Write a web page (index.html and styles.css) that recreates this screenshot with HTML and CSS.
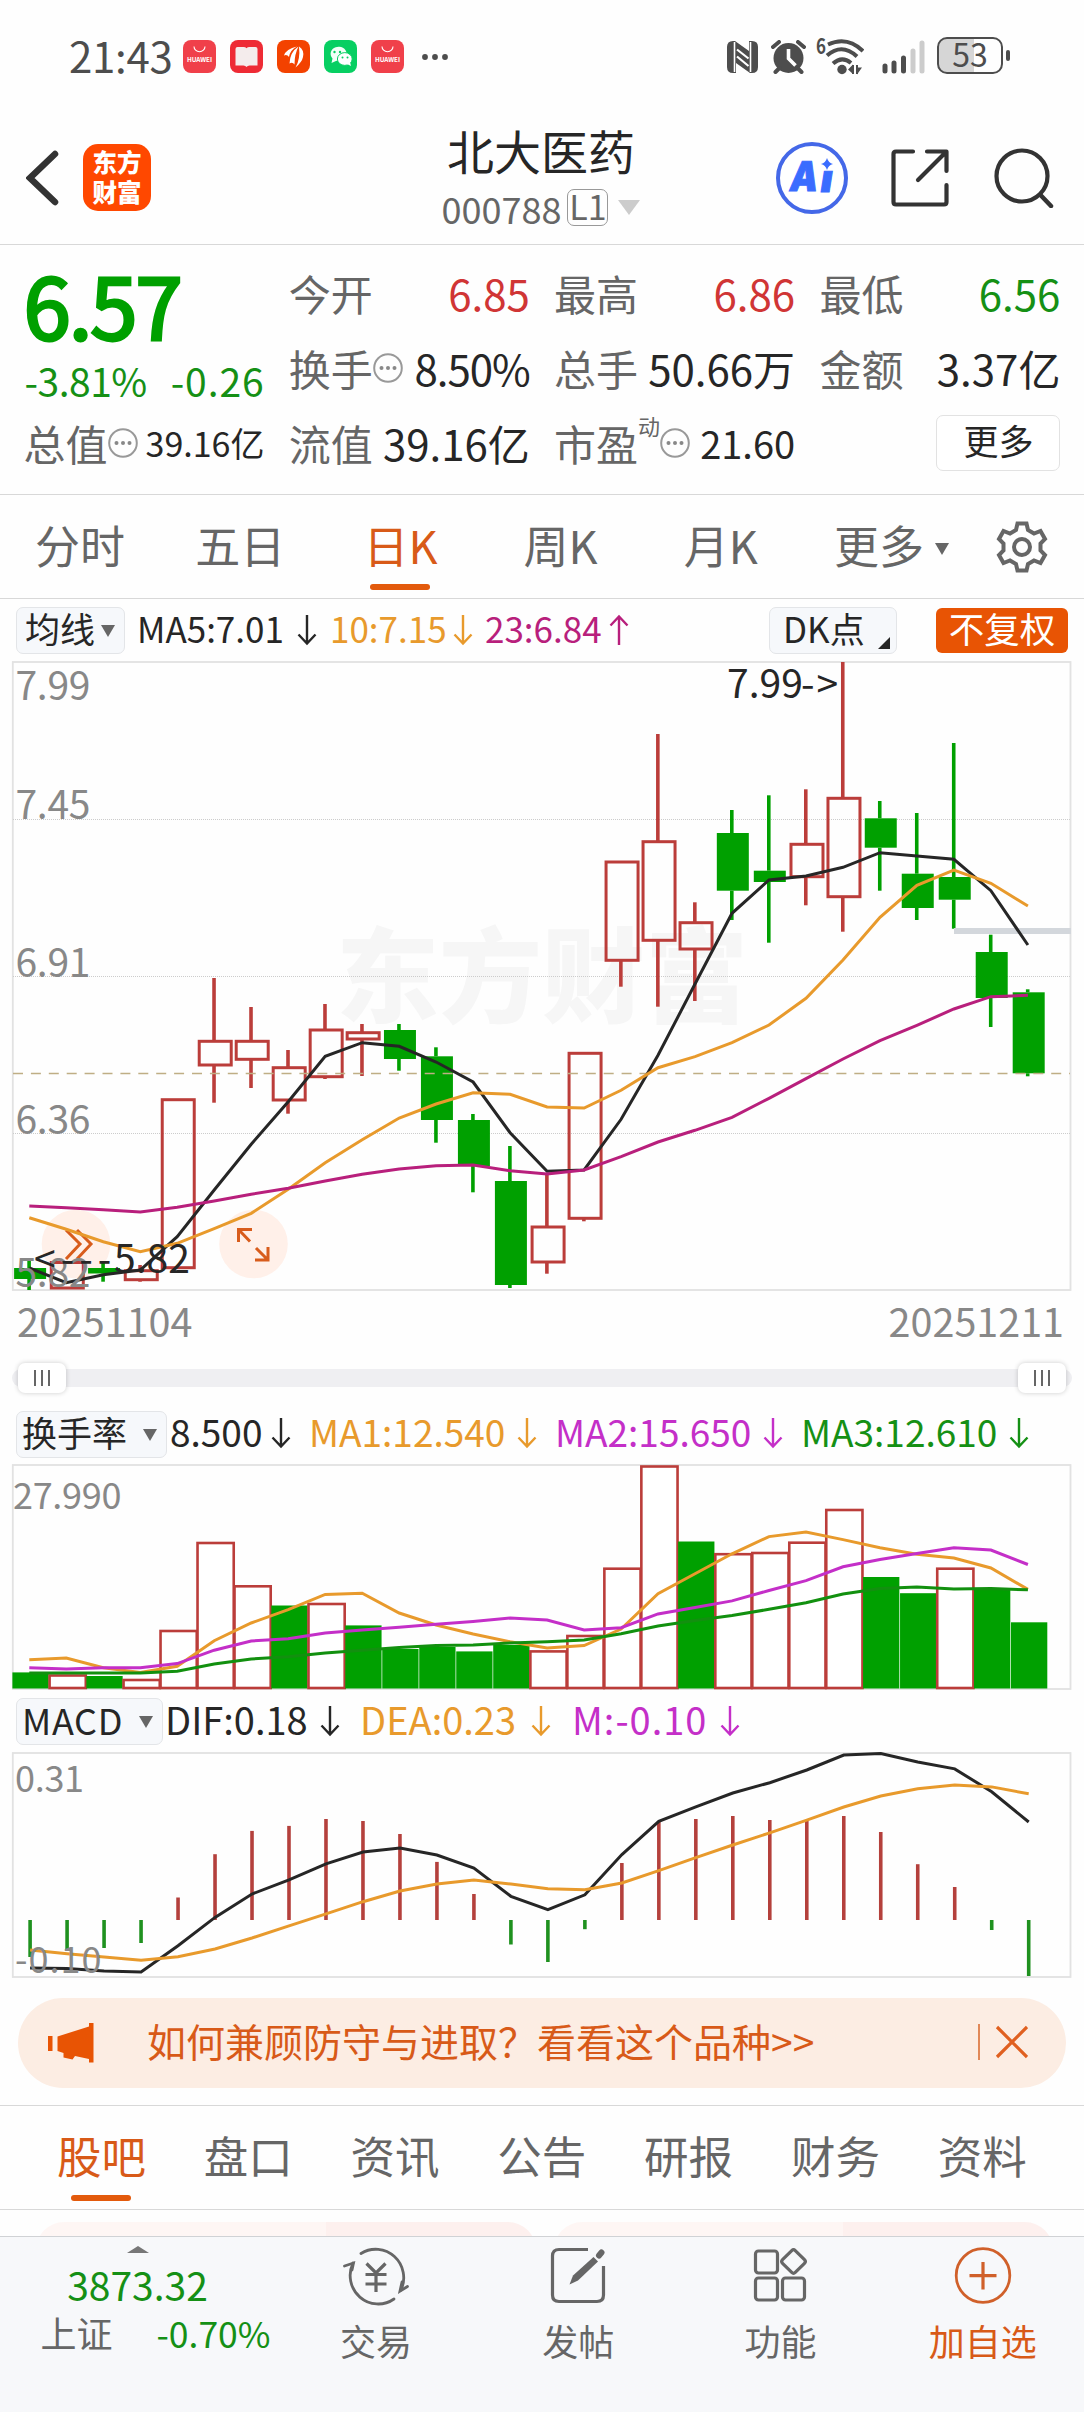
FILE: index.html
```html
<!DOCTYPE html>
<html lang="zh-CN">
<head>
    <meta charset="UTF-8">
    <meta name="viewport" content="width=device-width, initial-scale=1.0">
    <title>北大医药 000788</title>
    <link rel="stylesheet" href="styles.css">
</head>
<body>

    <!-- Shared symbols -->
    <svg class="symbols" width="0" height="0">
        <symbol id="arrow-down" viewBox="0 0 20 32">
            <path d="M10 1V29M1.5 20.5L10 29.5L18.5 20.5" fill="none" stroke="currentColor" stroke-width="2.4"/>
        </symbol>
        <symbol id="arrow-up" viewBox="0 0 20 32">
            <path d="M10 31V3M1.5 11.5L10 2.5L18.5 11.5" fill="none" stroke="currentColor" stroke-width="2.4"/>
        </symbol>
        <symbol id="info" viewBox="0 0 30 30">
            <circle cx="15" cy="15" r="13.8" fill="none" stroke="#999" stroke-width="2"/>
            <g fill="#888"><circle cx="8.5" cy="15" r="2"/><circle cx="15" cy="15" r="2"/><circle cx="21.5" cy="15" r="2"/></g>
        </symbol>
    </svg>

    <!-- Status Bar -->
    <div class="status">
        <span class="clock">21:43</span>
        <div class="apps">
            <svg width="33" height="33" viewBox="0 0 33 33">
                <rect width="33" height="33" rx="8" fill="#f0404a"/>
                <path d="M11 6.500a5.500 5.200 0 0 0 11 0" fill="none" stroke="#fff" stroke-width="1.100"/>
                <text x="4" y="21.500" font-size="6.400" font-weight="700" textLength="25" fill="#fff">HUAWEI</text>
            </svg>
            <svg width="33" height="33" viewBox="0 0 33 33">
                <rect width="33" height="33" rx="8" fill="#ee2b35"/>
                <path d="M5.500 9q0-2 2-2h6q2 0 3 1.200q1-1.200 3-1.200h6q2 0 2 2v16.500h-8q-2 0-3 1.500q-1-1.500-3-1.500h-8z" fill="#f4ecec"/>
            </svg>
            <svg width="33" height="33" viewBox="0 0 33 33">
                <rect width="33" height="33" rx="8" fill="#f34200"/>
                <path d="M7 15.500Q9 9 20 6.500Q13 10 12 17Q10 14 7 15.500z" fill="#fff"/>
                <path d="M12.500 23.500Q13 12 21.500 6.500Q17.500 14 17.500 24.500Q15.500 21.500 12.500 23.500z" fill="#fff"/>
                <path d="M18.500 27.500Q23.500 19 22 6.500Q27.500 10 26 17Q25 22 18.500 27.500z" fill="#fff"/>
            </svg>
            <svg width="33" height="33" viewBox="0 0 33 33">
                <rect width="33" height="33" rx="8" fill="#07cf62"/>
                <path d="M7.500 23l1-4.500a8 7.200 0 1 1 4 2.300z" fill="#f2fff7"/>
                <ellipse cx="20.800" cy="19" rx="7.400" ry="6.400" fill="#fff" stroke="#07cf62"/>
                <path d="M23 24l4 2-1-4z" fill="#fff"/>
                <g fill="#07cf62"><circle cx="10.500" cy="12" r="1.200"/><circle cx="16" cy="12" r="1.200"/><circle cx="18.500" cy="17.500" r="1"/><circle cx="23.500" cy="17.500" r="1"/></g>
            </svg>
            <svg width="33" height="33" viewBox="0 0 33 33">
                <rect width="33" height="33" rx="8" fill="#f0404a"/>
                <path d="M11 6.500a5.500 5.200 0 0 0 11 0" fill="none" stroke="#fff" stroke-width="1.100"/>
                <text x="4" y="21.500" font-size="6.400" font-weight="700" textLength="25" fill="#fff">HUAWEI</text>
            </svg>
        </div>
        <svg class="dots" width="28" height="8" viewBox="0 0 28 8"><g fill="#4d4d4d"><circle cx="4" cy="4" r="2.900"/><circle cx="14" cy="4" r="2.900"/><circle cx="24" cy="4" r="2.900"/></g></svg>
        <div class="system">
            <!-- nfc -->
            <svg width="31" height="32" viewBox="0 0 31 32">
                <path d="M6 0Q0 0 0 6V26Q0 32 6 32z" fill="#4d4d4d"/>
                <path d="M25 0Q31 0 31 6V26Q31 32 25 32z" fill="#4d4d4d"/>
                <path d="M8 0L22 10V0H25V32H23L9 22V32H6V0z" fill="#4d4d4d"/>
                <path d="M7.500 1V31M23.500 1V31" stroke="#fff" stroke-width="1.600"/>
                <path d="M10 8.500L21.500 17.500M10 15.500L21.500 25" stroke="#fff" stroke-width="2.200"/>
            </svg>
            <!-- alarm -->
            <svg class="alarm" width="35" height="34" viewBox="0 0 35 34">
                <circle cx="17.500" cy="18" r="15" fill="#4d4d4d"/>
                <path d="M2 7l6-5M33 7l-6-5M4.500 32l4-4M30.500 32l-4-4" stroke="#4d4d4d" stroke-width="4" stroke-linecap="round"/>
                <path d="M17.500 9v9.500l7 7" fill="none" stroke="#fff" stroke-width="3.600"/>
            </svg>
            <!-- wifi -->
            <svg class="wifi" width="48" height="37" viewBox="0 0 48 37">
                <text x="0" y="16" font-size="21" font-weight="700" textLength="10" lengthAdjust="spacingAndGlyphs" fill="#4d4d4d">6</text>
                <g fill="none" stroke="#4d4d4d" stroke-width="4">
                    <path d="M12 6.500Q31-2.500 47 13M11 17.500Q26 4.500 41 18.500M17 25.500Q26 17.500 35 25"/>
                </g>
                <circle cx="26" cy="31.500" r="4.700" fill="#4d4d4d"/>
                <path d="M32 31.500l5-5v9.500zM46 29.500h-5v7z" fill="#4d4d4d"/>
                <path d="M37 27v9M41 27v9" stroke="#4d4d4d" stroke-width="2"/>
            </svg>
            <!-- signal -->
            <svg class="signal" width="43" height="35" viewBox="0 0 43 35">
                <g stroke-width="5" stroke-linecap="round" stroke="#4d4d4d"><path d="M3 27v5M12 24v8M21.500 19v13"/><path d="M31 12v20M40 4v28" stroke="#ccc"/></g>
            </svg>
            <div class="battery"><span>53</span></div>
        </div>
    </div>

    <!-- Header -->
    <header class="header">
        <svg class="back" width="34" height="56" viewBox="0 0 34 56"><path d="M29 4L4 28L29 52" fill="none" stroke="#333" stroke-width="6.500" stroke-linecap="round"/></svg>
        <div class="logo"><span>东方</span><span>财富</span></div>
        <div class="title">
            <h1>北大医药</h1>
            <div class="code">000788<span class="level">L1</span><i class="tri"></i></div>
        </div>
        <div class="tools">
            <svg width="72" height="72" viewBox="0 0 72 72">
                <circle cx="36" cy="36" r="34" fill="#fff" stroke="#4468e8" stroke-width="4"/>
                <g class="ai" transform="translate(8 0) skewX(-9)">
                    <text x="12" y="49.500" font-size="41" textLength="28" lengthAdjust="spacingAndGlyphs">A</text>
                    <text x="43" y="50.500" font-size="38" textLength="12" lengthAdjust="spacingAndGlyphs">ı</text>
                </g>
                <path d="M51 16q1.500 5 6 6q-4.500 1-6 6q-1.500-5-6-6q4.500-1 6-6z" fill="#3a6cff"/>
            </svg>
            <svg class="share" width="58" height="58" viewBox="0 0 58 58">
                <path d="M22 2.500H5Q2.500 2.500 2.500 5V53Q2.500 55.500 5 55.500H53Q55.500 55.500 55.500 53V36M36 2.500H55.500V22M54 4L27 31" fill="none" stroke="#333" stroke-width="4.200" stroke-linecap="round" stroke-linejoin="round"/>
            </svg>
            <svg class="search" width="60" height="60" viewBox="0 0 60 60">
                <circle cx="28" cy="28" r="25.500" fill="none" stroke="#333" stroke-width="4.200"/>
                <path d="M46.500 47L57 58" stroke="#333" stroke-width="4.500" stroke-linecap="round"/>
            </svg>
        </div>
    </header>

    <!-- Quote -->
    <section class="quote">
        <div class="col main">
            <div class="price">6.57</div>
            <div class="change"><span>-3.81%</span><span>-0.26</span></div>
            <div class="row"><label>总值</label><svg class="info" width="30" height="30"><use href="#info"/></svg><b class="small">39.16亿</b></div>
        </div>
        <div class="col">
            <div class="row"><label>今开</label><b class="red">6.85</b></div>
            <div class="row"><label>换手</label><svg class="info" width="30" height="30"><use href="#info"/></svg><b class="rate">8.50%</b></div>
            <div class="row"><label>流值</label><b>39.16亿</b></div>
        </div>
        <div class="col">
            <div class="row"><label>最高</label><b class="red">6.86</b></div>
            <div class="row"><label>总手</label><b>50.66万</b></div>
            <div class="row"><label>市盈</label><sup>动</sup><svg class="info" width="30" height="30"><use href="#info"/></svg><b class="mid">21.60</b></div>
        </div>
        <div class="col">
            <div class="row"><label>最低</label><b class="green">6.56</b></div>
            <div class="row"><label>金额</label><b>3.37亿</b></div>
            <div class="row"><button class="more">更多</button></div>
        </div>
    </section>

    <!-- Period Tabs -->
    <nav class="periods">
        <a>分时</a><a>五日</a><a class="active">日K</a><a>周K</a><a>月K</a>
        <a class="wide">更多<i class="tri"></i></a>
        <svg class="gear" width="52" height="52" viewBox="0 0 52 52">
            <path d="M21.500 2.500h9l1.500 6.500 6 3.500 6.500-2.500 4.500 8-4.500 4.500v7l4.500 4.500-4.500 8-6.500-2.500-6 3.500-1.500 6.500h-9l-1.500-6.500-6-3.500-6.500 2.500-4.500-8 4.500-4.500v-7l-4.500-4.500 4.500-8 6.500 2.500 6-3.500z" fill="none" stroke="#666" stroke-width="4"/>
            <circle cx="26" cy="26" r="8" fill="none" stroke="#666" stroke-width="4"/>
        </svg>
    </nav>

    <!-- K Line Chart -->
    <div class="bar bar-ma">
        <span class="select">均线<i class="tri"></i></span>
        <span class="item w1">MA5:7.01<svg><use href="#arrow-down"/></svg></span>
        <span class="item w2 orange">10:7.15<svg><use href="#arrow-down"/></svg></span>
        <span class="item w3 pink">23:6.84<svg><use href="#arrow-up"/></svg></span>
        <span class="select dk">DK点<i class="corner"></i></span>
        <span class="adjust">不复权</span>
    </div>
    <svg class="chart" id="kline" width="1084" height="630" viewBox="0 661 1084 630"></svg>
    <div class="dates"><span>20251104</span><span>20251211</span></div>
    <div class="slider"><i class="handle"></i><i class="handle"></i></div>

    <!-- Turnover Chart -->
    <div class="bar bar-turn">
        <span class="select">换手率<i class="tri"></i></span>
        <span class="item t1">8.500<svg><use href="#arrow-down"/></svg></span>
        <span class="item t2 orange">MA1:12.540<svg><use href="#arrow-down"/></svg></span>
        <span class="item t2 purple">MA2:15.650<svg><use href="#arrow-down"/></svg></span>
        <span class="item t2 green">MA3:12.610<svg><use href="#arrow-down"/></svg></span>
    </div>
    <svg class="chart" id="turnover" width="1084" height="226" viewBox="0 1464 1084 226"></svg>

    <!-- MACD Chart -->
    <div class="bar bar-macd">
        <span class="select">MACD<i class="tri"></i></span>
        <span class="item m1">DIF:0.18<svg><use href="#arrow-down"/></svg></span>
        <span class="item m2 orange">DEA:0.23<svg><use href="#arrow-down"/></svg></span>
        <span class="item m3 purple">M:-0.10<svg><use href="#arrow-down"/></svg></span>
    </div>
    <svg class="chart" id="macd" width="1084" height="227" viewBox="0 1752 1084 227"></svg>

    <!-- Promo Banner -->
    <div class="promo">
        <svg width="46" height="40" viewBox="0 0 46 40"><path d="M0 13h4.500v15H0zM9.500 13.500L41 3.500V0h4.500v39.500H41V36l-14-3-2.500 3.500-9-2V30l-6-2z" fill="#e85404"/></svg>
        <p>如何兼顾防守与进取？看看这个品种&gt;&gt;</p>
        <svg class="close" width="50" height="38" viewBox="0 0 50 38"><path d="M1 1V37" stroke="#d8662a" stroke-width="1.500"/><path d="M19 4L49 34M49 4L19 34" stroke="#e06020" stroke-width="3.200"/></svg>
    </div>

    <!-- Info Tabs -->
    <nav class="tabs">
        <a class="active">股吧</a><a>盘口</a><a>资讯</a><a>公告</a><a>研报</a><a>财务</a><a>资料</a>
    </nav>
    <div class="cards"><div></div><div></div></div>

    <!-- Bottom Bar -->
    <footer class="bottom">
        <div class="index">
            <i class="up"></i>
            <div class="points">3873.32</div>
            <div class="pct"><span>上证</span><b>-0.70%</b></div>
        </div>
        <a>
            <svg width="66" height="60" viewBox="0 0 66 60">
                <g fill="none" stroke="#666" stroke-width="2.800" stroke-linecap="round">
                    <path d="M18 7.500A28 28.500 0 0 1 58 44M51 53A28 28.500 0 0 1 10 17"/>
                    <path d="M1.500 20L10.500 17L9 24M64.500 40.500L57 45L59 36"/>
                    <path stroke-linecap="butt" stroke-width="3.200" d="M23.500 17.500L33 27L42.500 17.500M22.500 28.500H43.500M22.500 38H43.500M33 27V46"/>
                </g>
            </svg>
            交易
        </a>
        <a>
            <svg width="56" height="60" viewBox="0 0 56 60">
                <path d="M38 3.500H9Q2.500 3.500 2.500 10V49Q2.500 55.500 9 55.500H47Q53.500 55.500 53.500 49V20" fill="none" stroke="#666" stroke-width="3.200"/>
                <path d="M19.500 38.500l3.500-9L43.500 11l4.500 4.500-20 19z" fill="#666"/>
                <path d="M49 9.500l2.500-3" stroke="#666" stroke-width="6" stroke-linecap="round"/>
            </svg>
            发帖
        </a>
        <a>
            <svg width="54" height="60" viewBox="0 0 54 60">
                <g fill="none" stroke="#666" stroke-width="3.200">
                    <rect x="2.500" y="5" width="22" height="22" rx="3"/>
                    <rect x="2.500" y="32" width="22" height="22" rx="3"/>
                    <rect x="29.500" y="32" width="22" height="22" rx="3"/>
                    <rect x="31.500" y="6.500" width="18" height="18" rx="2.500" transform="rotate(45 40.500 15.500)"/>
                </g>
            </svg>
            功能
        </a>
        <a class="active">
            <svg width="58" height="60" viewBox="0 0 58 60">
                <circle cx="29" cy="29.500" r="26.800" fill="none" stroke="#d0602a" stroke-width="2.800"/>
                <path d="M29 16V43.500M15.500 29.700H42.500" stroke="#d0602a" stroke-width="3.200"/>
            </svg>
            加自选
        </a>
    </footer>

    <script>
        const STEP = 36.985;
        const RED = "#bb3d3a", GREEN = "#00a000", BLACK = "#262626", ORANGE = "#e89a2c";

        const kline = document.getElementById("kline");
        const turnover = document.getElementById("turnover");
        const macd = document.getElementById("macd");

        // [up, high, bodyTop, bodyBottom, low]
        const candles = [
            [0, 1261, 1268, 1279, 1290], [1, 1262, 1262.5, 1288, 1288], [0, 1261.5, 1268, 1273.5, 1281.7], [1, 1265, 1270.7, 1279.7, 1281.7],
            [1, 1099.7, 1099.7, 1267.7, 1267.7], [1, 978, 1041.3, 1065, 1102.7], [1, 1007, 1041.3, 1059.3, 1088], [1, 1050, 1067.7, 1100, 1113.7],
            [1, 1004, 1030, 1076.7, 1079], [1, 1024, 1032.7, 1039, 1076], [0, 1024, 1030, 1059, 1070.7], [0, 1047.3, 1056.3, 1120, 1142.7],
            [0, 1114, 1120, 1166, 1192.3], [0, 1146, 1181, 1285, 1288], [1, 1173, 1227, 1262, 1273.7], [1, 1053.3, 1053.3, 1218.3, 1221.3],
            [1, 862, 862, 960.3, 986.7], [1, 734, 841.7, 940.3, 1006.7], [1, 902.3, 922.7, 949, 1001], [0, 810, 833, 890.7, 920],
            [0, 795.3, 870.7, 882, 942.7], [1, 789.3, 844.3, 876.7, 905.3], [1, 662, 798.3, 896.7, 931.7], [0, 801, 818.3, 847.7, 890.7],
            [0, 813, 873.7, 908, 920], [0, 743, 877, 899.7, 928.7], [0, 934.7, 952, 998, 1027], [0, 989.3, 992.3, 1073.3, 1076.3]
        ];
        const ma5 = [1268, 1282.7, 1274.7, 1270, 1236.7, 1190, 1144.3, 1101.7, 1056.3, 1042.7, 1046.3, 1062, 1082, 1132.7, 1171.3, 1170, 1119.3, 1055.3, 984, 913.3, 880, 876, 867.3, 852.7, 856, 859.3, 890.7, 945];
        const ma10 = [1217.7, 1229.3, 1241.7, 1251.7, 1243.3, 1228.7, 1213.3, 1189.3, 1162.7, 1139.7, 1118, 1104, 1092.7, 1094.3, 1107, 1108, 1090.3, 1067.7, 1056.7, 1042.7, 1025, 998.3, 960, 917.3, 885.3, 870, 883.3, 906];
        const ma23 = [1206, 1207.7, 1209.7, 1212, 1207.3, 1201, 1194.3, 1188.3, 1181, 1174.3, 1169, 1165.7, 1165, 1170.7, 1174, 1170, 1156.7, 1142, 1130.3, 1117.3, 1098.3, 1078.7, 1059, 1040.7, 1025.3, 1009, 996.7, 995.3];

        // Turnover bar tops, colours follow "up"
        const bars = [
            [0, 1672.4], [1, 1675.5], [0, 1676], [1, 1680], [1, 1631], [1, 1543], [1, 1586.3], [0, 1605.5], [1, 1604], [0, 1625.4],
            [0, 1649], [0, 1647], [0, 1651.4], [0, 1645], [1, 1651.4], [1, 1636], [1, 1568.7], [1, 1466.5], [0, 1541.5], [1, 1554.2],
            [1, 1553], [1, 1542.7], [1, 1510], [0, 1577], [0, 1593.2], [1, 1568.7], [0, 1588.5], [0, 1622.3]
        ];
        const tma1 = [1659.8, 1658, 1667.8, 1672.4, 1666.3, 1640.7, 1623, 1609.7, 1594.4, 1593.2, 1613, 1625, 1634, 1641.8, 1648, 1645.6, 1629, 1593.6, 1573.7, 1553.8, 1536.6, 1532, 1539.6, 1547.7, 1554.2, 1558, 1568, 1589.4];
        const tma2 = [1667.8, 1669, 1667.8, 1667.8, 1663.6, 1650.2, 1641, 1638.8, 1633, 1630, 1627.3, 1624.2, 1621.5, 1618, 1620, 1630, 1627.7, 1613.9, 1607.4, 1600.9, 1590.5, 1580.6, 1566.8, 1559.5, 1553.4, 1547.7, 1550, 1564.5];
        const tma3 = [1673, 1673, 1673, 1673, 1671.3, 1664, 1659, 1656.7, 1653, 1650.2, 1647.6, 1645.6, 1644.9, 1643, 1641.8, 1639.9, 1633.8, 1626, 1620.4, 1615.4, 1609.3, 1602.8, 1594, 1588.6, 1587, 1589, 1588.6, 1589.8];

        // MACD histogram ends, zero axis at 1920
        const hist = [1957, 1950, 1948, 1943, 1897.5, 1854.2, 1830.9, 1825.9, 1819, 1821, 1834, 1861.9, 1894, 1944.5, 1962, 1929.2, 1863, 1821, 1819, 1816, 1820, 1820, 1816, 1832, 1864.2, 1887, 1930, 1976];
        const dif = [1968, 1968.6, 1971, 1972, 1945.7, 1917.4, 1894, 1879.9, 1863.8, 1852, 1848, 1855, 1868, 1896.3, 1909.7, 1894.8, 1854.6, 1821.3, 1806.8, 1793, 1782.7, 1770, 1755, 1753.5, 1762, 1768.9, 1791.8, 1822];
        const dea = [1950, 1953.7, 1957, 1960.2, 1956.8, 1949, 1938, 1925.8, 1913.9, 1901.7, 1891, 1884, 1879.9, 1884, 1888.7, 1889.8, 1883, 1870.7, 1857.7, 1845, 1832.8, 1820.2, 1807, 1796, 1788.8, 1785, 1786.9, 1793.8];

        function add(svg, tag, attrs, text) {
            const el = document.createElementNS("http://www.w3.org/2000/svg", tag);
            for (const key in attrs) el.setAttribute(key, attrs[key]);
            if (text) el.textContent = text;
            svg.appendChild(el);
        }

        function frame(svg, top, bottom) {
            add(svg, "rect", { x: 12.8, y: top, width: 1057.7, height: bottom - top, fill: "none", stroke: "#e2e2e2", "stroke-width": 1.8 });
        }

        function line(svg, values, color, x0) {
            const points = values.map((y, i) => (x0 + i * STEP).toFixed(1) + "," + y).join(" ");
            add(svg, "polyline", { points, fill: "none", stroke: color, "stroke-width": 3 });
        }

        function label(svg, x, y, text, cls) {
            add(svg, "text", { x, y, class: cls }, text);
        }

        function drawKline() {
            label(kline, 336, 1015, "东方财富", "watermark");
            frame(kline, 662, 1290);
            [819.5, 976.5, 1133.5].forEach(y => add(kline, "path", { d: `M13 ${y}H1070`, stroke: "#ccc", "stroke-width": 1, "stroke-dasharray": "1 1" }));
            // floating buttons
            [76, 253.5].forEach(cx => add(kline, "circle", { cx, cy: 1244, r: 34.3, fill: "#fff0e9" }));
            add(kline, "path", { d: "M66 1230L80 1244L66 1259M77 1230L91 1244L77 1259M238.500 1242V1229.500H252M239 1230L250 1241.500M268 1247V1260H255M267.500 1259.500L256 1248", fill: "none", stroke: "#d85c1c", "stroke-width": 3 });
            candles.forEach(([up, high, top, bottom, low], i) => {
                const x = 29.1 + i * STEP;
                const color = up ? RED : GREEN;
                if (high < top) add(kline, "path", { d: `M${x} ${high}V${top}`, stroke: color, "stroke-width": 3.6 });
                if (low > bottom) add(kline, "path", { d: `M${x} ${bottom}V${low}`, stroke: color, "stroke-width": 3.6 });
                add(kline, "rect", up
                    ? { x: x - 14.8, y: top, width: 32, height: bottom - top, fill: "none", stroke: color, "stroke-width": 3 }
                    : { x: x - 15, y: top, width: 32, height: bottom - top, fill: color });
            });
            add(kline, "path", { d: "M13 1073.500H1070", stroke: "#bfae85", "stroke-width": 1.4, "stroke-dasharray": "10 7.9" });
            add(kline, "rect", { x: 954, y: 928, width: 117, height: 6, fill: "#d3d7dc" });
            line(kline, ma5, BLACK, 29.3);
            line(kline, ma10, ORANGE, 29.3);
            line(kline, ma23, "#b81f7c", 29.3);
            [[700, "7.99"], [819, "7.45"], [977, "6.91"], [1134, "6.36"], [1287, "5.82"]].forEach(([y, t]) => label(kline, 15.5, y, t, "axis"));
            label(kline, 727, 697.5, "7.99", "mark");
            label(kline, 801, 697.5, "->", "mark arrow");
            label(kline, 34, 1272.5, "<---", "mark dash");
            label(kline, 114, 1272.5, "5.82", "mark");
        }

        function drawTurnover() {
            frame(turnover, 1465, 1689);
            bars.forEach(([up, y], i) => {
                const x = 12.4 + i * STEP;
                add(turnover, "rect", up
                    ? { x: x + .2, y, width: 36.2, height: 1688 - y, fill: "#fff", stroke: RED, "stroke-width": 2.6 }
                    : { x, y, width: 36.3, height: 1688.5 - y, fill: GREEN });
            });
            line(turnover, tma1, ORANGE, 29.3);
            line(turnover, tma2, "#c42fc8", 29.3);
            line(turnover, tma3, "#12900f", 29.3);
            label(turnover, 13, 1509, "27.990", "axis sub");
        }

        function drawMacd() {
            frame(macd, 1753, 1977);
            hist.forEach((y, i) => {
                const x = 30.1 + i * STEP;
                add(macd, "path", { d: `M${x} 1920V${y}`, stroke: y < 1920 ? "#b4403c" : "#1f911f", "stroke-width": 3.6 });
            });
            line(macd, dif, BLACK, 30.1);
            line(macd, dea, ORANGE, 30.1);
            label(macd, 15, 1792, "0.31", "axis sub");
            label(macd, 15, 1973, "-0.10", "axis sub neg");
        }

        drawKline();
        drawTurnover();
        drawMacd();
    </script>

</body>
</html>
```
FILE: styles.css
```css
* {
    box-sizing: border-box;
}
body {
    margin: 0;
    width: 1084px;
    height: 2412px;
    overflow: hidden;
    background: #fefefe;
    color: #262626;
    font-family: "Noto Sans CJK SC", sans-serif;
    font-size: 42px;
}
svg {
    display: block;
    flex: none;
}
b, i {
    font-weight: normal;
    font-style: normal;
}
.symbols {
    position: absolute;
}
.red { color: #d03535; }
.row .green, .green { color: #159015; }
.orange { color: #e89a2c; }
.pink { color: #b81f7c; }
.purple { color: #c42fc8; }

.tri {
    display: inline-block;
    border: 7.500px solid transparent;
    border-top: 12px solid #666;
    border-bottom: 0;
}

/* Status bar */
.status {
    display: flex;
    align-items: center;
    height: 113px;
    padding: 0 74px 0 69px;
    color: #4d4d4d;
}
.clock {
    width: 114px;
    line-height: 40px;
    padding-bottom: 4px;
    letter-spacing: -.3px;
}
.apps {
    display: flex;
    gap: 14px;
}
.dots {
    margin-left: 17px;
}
.system {
    display: flex;
    align-items: center;
    margin-left: auto;
}
.alarm { margin-left: 13px; }
.wifi { margin: 0 18px 0 10px; }
.battery {
    position: relative;
    width: 66px;
    height: 37px;
    margin: 0 7px 2px 12px;
    border: 2.500px solid #4d4d4d;
    border-radius: 10px;
    background: linear-gradient(90deg, #d6d6d6 57%, transparent 57%);
    font-size: 32px;
    line-height: 29px;
    text-align: center;
}
.battery::after {
    content: "";
    position: absolute;
    right: -9px;
    top: 11px;
    width: 4px;
    height: 11px;
    border-radius: 2px;
    background: #4d4d4d;
}

/* Header */
.header {
    display: flex;
    align-items: center;
    height: 132px;
    padding: 0 30px 0 26px;
    border-bottom: 1.500px solid #d8d8d8;
}
.logo {
    display: flex;
    flex-direction: column;
    width: 68px;
    height: 67px;
    margin-left: 23px;
    padding-top: 3px;
    border-radius: 15px;
    background: #ff4800;
    color: #fff;
    font-size: 24.500px;
    font-weight: 900;
    line-height: 30px;
    text-align: center;
}
.back, .logo { margin-bottom: 2px; }
.title {
    width: 220px;
    margin-left: 280px;
    padding-bottom: 7px;
    text-align: center;
}
.title h1 {
    margin: 0;
    font-size: 47px;
    font-weight: 400;
    line-height: 62px;
}
.code {
    display: flex;
    align-items: center;
    justify-content: center;
    margin-top: 3px;
    font-size: 36px;
    line-height: 48px;
    color: #666;
}
.level {
    width: 41px;
    height: 37px;
    margin-left: 6px;
    border: 1.500px solid #999;
    border-radius: 7px;
    font-size: 34px;
    line-height: 31px;
}
.code .tri {
    margin-left: 10px;
    border-width: 15px 11px 0;
    border-top-color: #ccc;
}
.tools {
    display: flex;
    align-items: center;
    margin: 0 0 2px auto;
}
.ai {
    font-family: Inter, sans-serif;
    font-weight: 900;
    fill: #3a6cff;
    stroke: #3a6cff;
    stroke-width: 1;
}
.share { margin: 0 45px 0 43px; }

/* Quote */
.quote {
    display: grid;
    grid-template-columns: repeat(4, 241px);
    column-gap: 24.300px;
    height: 250px;
    padding: 10px 0 0 23.500px;
    border-bottom: 1.500px solid #d8d8d8;
}
.price {
    height: 92px;
    color: #00a000;
    font-size: 85px;
    line-height: 96px;
    letter-spacing: -2px;
    -webkit-text-stroke: 3px #00a000;
}
.change {
    display: flex;
    justify-content: space-between;
    height: 58px;
    padding-left: 1px;
    color: #159015;
    font-size: 39px;
    line-height: 66px;
}
.change span:first-child { letter-spacing: -.5px; }
.change span:last-child { letter-spacing: .9px; }
.row {
    display: flex;
    align-items: center;
    height: 75px;
    white-space: nowrap;
}
.row label {
    color: #666;
}
.row b {
    margin-left: auto;
    color: #262626;
}
.row .red { color: #d03535; }
.row .green { color: #159015; }
.row .small { font-size: 34px; }
.row .mid { font-size: 38px; }
.row .rate { letter-spacing: -1px; }
.row sup {
    height: 62px;
    color: #666;
    font-size: 22px;
    line-height: 26px;
}
.more {
    width: 124px;
    height: 56px;
    margin-left: auto;
    padding: 0 0 6px;
    border: 1.500px solid #e2e2e2;
    border-radius: 7px;
    background: #fff;
    color: #262626;
    font: 35px/46px "Noto Sans CJK SC", sans-serif;
}

/* Period tabs */
.periods {
    display: flex;
    height: 104px;
    border-bottom: 1.500px solid #d8d8d8;
    color: #666;
    font-size: 45px;
}
.periods a {
    position: relative;
    width: 160.200px;
    line-height: 99px;
    text-align: center;
}
.periods .wide {
    width: 181px;
}
.periods .tri {
    margin: 0 0 9px 11px;
}
.gear {
    margin: 26px 0 0 14px;
}
.periods .active, .tabs .active {
    color: #d85a18;
}
.periods .active::after, .tabs .active::after {
    content: "";
    position: absolute;
    left: 50%;
    bottom: 8px;
    width: 60px;
    height: 6px;
    margin-left: -30px;
    border-radius: 3px;
    background: #e35a0c;
}

/* Chart legends */
.bar {
    display: flex;
    align-items: center;
    padding-left: 16px;
    white-space: nowrap;
}
.bar-ma {
    height: 62px;
    font-size: 35px;
}
.bar-turn {
    height: 60px;
    font-size: 37px;
}
.bar-macd {
    height: 62px;
    font-size: 38px;
}
.select {
    display: flex;
    align-items: center;
    justify-content: space-between;
    width: 109px;
    height: 47px;
    padding: 0 9px 4px 8px;
    border: 1.500px solid #e3e5e8;
    border-radius: 7px;
    background: #f6f8fb;
    font-size: 35px;
    line-height: 40px;
}
.select .tri {
    margin-top: 5px;
}
.item {
    display: flex;
    align-items: center;
    justify-content: space-between;
    padding-bottom: 5px;
    line-height: 40px;
}
.item svg {
    width: 20px;
    height: 32px;
    margin-top: 5px;
}
.w1 { width: 180px; margin-left: 12px; }
.w2 { width: 143px; margin-left: 13px; }
.w3 { width: 144px; margin-left: 12px; }
.bar-turn .item { padding-bottom: 7px; }
.dk {
    width: 128px;
    margin-left: 140px;
    padding: 0 6px 4px 13px;
}
.corner {
    align-self: flex-end;
    border: 6px solid #262626;
    border-top-color: transparent;
    border-left-color: transparent;
}
.adjust {
    width: 132px;
    height: 45px;
    margin-left: 39px;
    border-radius: 6px;
    background: #e85404;
    color: #fff;
    font-size: 35.500px;
    line-height: 39px;
    text-align: center;
}
.bar-turn .select { width: 151px; padding-left: 5px; }
.bar-macd .select { width: 147px; padding-left: 5px; font-size: 36px; letter-spacing: .7px; }
.t1 { width: 121px; margin-left: 3px; }
.t2 { width: 228px; margin-left: 18px; }
.m1 { width: 175px; margin-left: 2px; }
.m2 { width: 191px; margin-left: 20px; }
.m3 { width: 168px; margin-left: 21px; letter-spacing: 1px; }

.axis {
    font-size: 39px;
    letter-spacing: -.3px;
    fill: #888;
}
.sub { font-size: 36px; }
.neg { letter-spacing: 1px; }
.mark {
    font-size: 39px;
    fill: #262626;
}
.dash { letter-spacing: 5px; }
.arrow { letter-spacing: 2px; }
.watermark {
    font-size: 103px;
    font-weight: 900;
    fill: #f6f6f6;
}

.dates {
    display: flex;
    justify-content: space-between;
    height: 72px;
    padding: 0 20px 0 17px;
    color: #888;
    font-size: 39.500px;
    line-height: 57px;
}
.slider {
    display: flex;
    align-items: center;
    justify-content: space-between;
    height: 18px;
    margin: 6px 12px 17px;
    padding: 0 6px;
    border-radius: 9px;
    background: #efeff2;
}
.handle {
    width: 48px;
    height: 30px;
    border-radius: 7px;
    background: linear-gradient(#666, #666) 16px 7px / 2px 16px no-repeat,
                linear-gradient(#666, #666) 23px 7px / 2px 16px no-repeat,
                linear-gradient(#666, #666) 30px 7px / 2px 16px no-repeat, #fff;
    box-shadow: 0 0 5px rgba(0, 0, 0, 0.2);
}

/* Promo banner */
.promo {
    display: flex;
    align-items: center;
    height: 90px;
    margin: 19px 18px 17px;
    padding: 0 38px 0 30px;
    border-radius: 45px;
    background: #fcede3;
    color: #d85a18;
    font-size: 39px;
}
.promo p {
    margin: 0 0 7px 53px;
}
.promo .close { margin: 0 0 2px auto; }

/* Info tabs */
.tabs {
    display: flex;
    height: 105px;
    padding-left: 28px;
    border-top: 1.500px solid #d8d8d8;
    border-bottom: 1.500px solid #d8d8d8;
    color: #666;
    font-size: 44.500px;
}
.tabs a {
    position: relative;
    width: 146.800px;
    line-height: 98px;
    text-align: center;
}
.cards {
    display: flex;
    gap: 18px;
    height: 26px;
    padding: 12px 31px 0 36px;
    overflow: hidden;
}
.cards div {
    flex: 1;
    height: 60px;
    border-radius: 28px;
    background: linear-gradient(90deg, #fef6f4 58%, #fdf0ee 58%);
}

/* Bottom bar */
.bottom {
    display: flex;
    height: 176px;
    border-top: 1.500px solid #d0d2d5;
    background: #f7f8fa;
    color: #666;
    font-size: 36px;
}
.bottom a {
    display: flex;
    flex-direction: column;
    align-items: center;
    width: 202.200px;
    padding-top: 9px;
    line-height: 69px;
}
.bottom .active { color: #d85a18; }
.index {
    display: flex;
    flex-direction: column;
    align-items: center;
    width: 275px;
}
.up {
    margin-top: 9px;
    border: 11px solid transparent;
    border-bottom: 7px solid #777;
    border-top: 0;
}
.points {
    color: #159015;
    font-size: 39px;
    line-height: 60px;
    margin-top: 1px;
}
.pct {
    display: flex;
    align-items: center;
    justify-content: space-between;
    width: 230px;
    margin-left: 36px;
    line-height: 37px;
}
.pct b {
    font-size: 35.500px;
    color: #159015;
}
```
